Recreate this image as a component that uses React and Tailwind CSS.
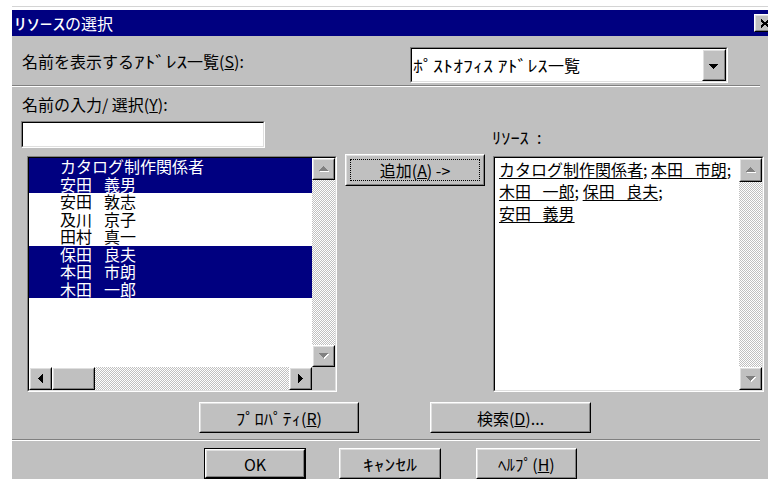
import React, { useId } from "react";

// Classic 3D bevels
function Raised({ className = "", innerClass = "", children }) {
  return (
    <div className={`border border-t-white border-l-white border-r-black border-b-black ${className}`}>
      <div className={`flex h-full w-full items-center justify-center border border-t-[#dfdfdf] border-l-[#dfdfdf] border-r-[#808080] border-b-[#808080] bg-[#c0c0c0] ${innerClass}`}>
        {children}
      </div>
    </div>
  );
}

function Sunken({ className = "", children }) {
  return (
    <div className={`border border-t-[#808080] border-l-[#808080] border-r-white border-b-white ${className}`}>
      <div className="h-full w-full border border-t-black border-l-black border-r-[#dfdfdf] border-b-[#dfdfdf]">
        {children}
      </div>
    </div>
  );
}

// 1px checker used for scrollbar tracks
function Track({ className = "" }) {
  const id = useId().replace(/:/g, "");
  return (
    <div className={`min-h-0 min-w-0 overflow-hidden ${className}`}>
      <svg className="block h-full w-full" shapeRendering="crispEdges">
        <defs>
          <pattern id={`chk${id}`} width="2" height="2" patternUnits="userSpaceOnUse">
            <rect width="2" height="2" fill="#c0c0c0" />
            <rect width="1" height="1" fill="#ffffff" />
            <rect x="1" y="1" width="1" height="1" fill="#ffffff" />
          </pattern>
        </defs>
        <rect width="100%" height="100%" fill={`url(#chk${id})`} />
      </svg>
    </div>
  );
}

function Tri({ dir, color = "#000", ghost = false }) {
  const shapes = {
    up: { w: 9, h: 5, pts: "4.5,0 9,5 0,5" },
    down: { w: 9, h: 5, pts: "0,0 9,0 4.5,5" },
    left: { w: 5, h: 9, pts: "5,0 5,9 0,4.5" },
    right: { w: 5, h: 9, pts: "0,0 5,4.5 0,9" },
  };
  const s = shapes[dir];
  return (
    <svg width={s.w + 1} height={s.h + 1} viewBox={`0 0 ${s.w + 1} ${s.h + 1}`} shapeRendering="crispEdges">
      {ghost && <polygon points={s.pts} fill="#ffffff" transform="translate(1 1)" />}
      <polygon points={s.pts} fill={color} />
    </svg>
  );
}

function Kana({ wc, sc, children }) {
  return (
    <span className={`inline-block whitespace-nowrap ${wc}`}>
      <span className={`inline-block origin-left whitespace-nowrap ${sc}`}>{children}</span>
    </span>
  );
}

function Button({ className = "", focus = false, def = false, children }) {
  const btn = (
    <Raised className={def ? "h-full w-full" : className}>
      {focus ? (
        <div className="m-[3px] flex h-[calc(100%-6px)] w-[calc(100%-6px)] items-center justify-center border border-dotted border-black">
          {children}
        </div>
      ) : (
        children
      )}
    </Raised>
  );
  if (def) return <div className={`border border-black ${className}`}>{btn}</div>;
  return btn;
}

const leftItems = [
  { text: ["カタログ制作関係者"], sel: true },
  { text: ["安田", "義男"], sel: true },
  { text: ["安田", "敦志"], sel: false },
  { text: ["及川", "京子"], sel: false },
  { text: ["田村", "真一"], sel: false },
  { text: ["保田", "良夫"], sel: true },
  { text: ["本田", "市朗"], sel: true },
  { text: ["木田", "一郎"], sel: true },
];

function Name({ parts }) {
  return (
    <>
      <span>{parts[0]}</span>
      {parts[1] && <span className="ml-[12px]">{parts[1]}</span>}
    </>
  );
}

function VScroll({ upH = "h-[22px]", downH = "h-[22px]" }) {
  return (
    <div className="flex w-[23px] shrink-0 flex-col">
      <Raised className={`${upH} w-full shrink-0`}>
        <Tri dir="up" color="#808080" ghost />
      </Raised>
      <Track className="flex-1" />
      <Raised className={`${downH} w-full shrink-0`}>
        <Tri dir="down" color="#808080" ghost />
      </Raised>
    </div>
  );
}

function U({ children }) {
  return (
    <span className="underline decoration-1 underline-offset-[2px] [word-spacing:8px]">{children}</span>
  );
}

export default function App() {
  return (
    <div className="h-[479px] w-[768px] overflow-hidden bg-white pl-[12px] pt-[6px] font-['Noto_Sans_CJK_JP',sans-serif] text-[16px] text-black">
      <div className="flex h-full flex-col border-t border-[#d4d4d4] pt-[3px]">
        {/* title bar */}
        <div className="flex h-[26px] shrink-0 items-start justify-between bg-[#000080] pl-[2px]">
          <span className="mt-[3px] leading-[20px] text-white">
            <Kana wc="w-[51px]" sc="scale-x-[1.6]">ﾘｿｰｽ</Kana>の選択
          </span>
          <Raised className="-mr-[7px] mt-[4px] h-[18px] w-[21px]">
            <svg width="10" height="9" viewBox="0 0 10 9" shapeRendering="crispEdges">
              <path d="M1 1 L9 8 M9 1 L1 8" stroke="#000" strokeWidth="2" />
            </svg>
          </Raised>
        </div>

        {/* dialog body */}
        <div className="flex flex-1 flex-col bg-[#c0c0c0]">
          <div className="flex h-[49px] shrink-0">
            <div className="w-[398px] whitespace-nowrap pl-[10px] pt-[15px] leading-[20px]">
              名前を表示する<Kana wc="w-[53px]" sc="scale-x-[1.33]">ｱﾄﾞﾚｽ</Kana>一覧(<span className="underline">S</span>):
            </div>
            <Sunken className="mt-[11px] h-[36px] w-[318px]">
              <div className="flex h-full bg-white">
                <div className="flex flex-1 items-center whitespace-nowrap pl-[1px] leading-[20px]">
                  <Kana wc="w-[135px]" sc="scale-x-[1.25]">ﾎﾟｽﾄｵﾌｨｽ ｱﾄﾞﾚｽ</Kana>一覧
                </div>
                <Raised className="h-full w-[24px]" innerClass="pt-[3px]">
                  <Tri dir="down" />
                </Raised>
              </div>
            </Sunken>
          </div>

          <div className="mr-[8px] h-[2px] shrink-0 border-t border-b border-t-[#808080] border-b-white" />

          <div className="mt-[7px] pl-[10px] leading-[20px]">
            名前の入力/ 選択(<span className="underline">Y</span>):
          </div>

          <div className="mt-[7px] flex items-end">
            <Sunken className="ml-[9px] h-[27px] w-[244px]">
              <div className="h-full bg-white" />
            </Sunken>
            <div className="mb-[1px] ml-[227px] whitespace-nowrap leading-[20px]">
              <Kana wc="w-[37px]" sc="scale-x-[1.15]">ﾘｿｰｽ</Kana>
              <span className="ml-[8px]">:</span>
            </div>
          </div>

          {/* lists */}
          <div className="mt-[6px] flex items-start">
            <Sunken className="ml-[15px] mt-[2px] h-[236px] w-[310px]">
              <div className="flex h-full flex-col bg-white">
                <div className="flex min-h-0 flex-1">
                  <div className="flex-1">
                    {leftItems.map((it, i) => (
                      <div
                        key={i}
                        className={`h-[17.5px] whitespace-nowrap pl-[31px] leading-[17.5px] ${
                          it.sel ? "bg-[#000080] text-white" : "bg-white text-black"
                        }`}
                      >
                        <Name parts={it.text} />
                      </div>
                    ))}
                  </div>
                  <VScroll />
                </div>
                <div className="flex h-[23px] shrink-0">
                  <Raised className="h-full w-[23px] shrink-0">
                    <Tri dir="left" />
                  </Raised>
                  <Raised className="h-full w-[43px] shrink-0" />
                  <Track className="flex-1" />
                  <Raised className="h-full w-[23px] shrink-0">
                    <Tri dir="right" />
                  </Raised>
                  <div className="w-[23px] shrink-0 bg-[#c0c0c0]" />
                </div>
              </div>
            </Sunken>

            <Button className="ml-[8px] h-[32px] w-[140px]" focus>
              <span className="whitespace-nowrap leading-[20px]">
                追加(<span className="underline">A</span>) -&gt;
              </span>
            </Button>

            <Sunken className="ml-[8px] mt-[2px] h-[236px] w-[271px]">
              <div className="flex h-full bg-white">
                <div className="flex-1 pl-[4px] leading-[22px]">
                  <div className="whitespace-nowrap">
                    <U>カタログ制作関係者</U>; <U>本田 市朗</U>;
                  </div>
                  <div className="whitespace-nowrap">
                    <U>木田 一郎</U>; <U>保田 良夫</U>;
                  </div>
                  <div className="whitespace-nowrap">
                    <U>安田 義男</U>
                  </div>
                </div>
                <VScroll upH="h-[24px]" downH="h-[23px]" />
              </div>
            </Sunken>
          </div>

          {/* property / search */}
          <div className="mt-[10px] flex">
            <Button className="ml-[187px] h-[31px] w-[160px]">
              <span className="whitespace-nowrap leading-[20px]">
                <Kana wc="w-[65px]" sc="scale-x-[1.16]">ﾌﾟﾛﾊﾟﾃｨ</Kana>(<span className="underline">R</span>)
              </span>
            </Button>
            <Button className="ml-[71px] h-[31px] w-[161px]">
              <span className="whitespace-nowrap leading-[20px]">
                検索(<span className="underline">D</span>)...
              </span>
            </Button>
          </div>

          <div className="mr-[8px] mt-[6px] h-[2px] shrink-0 border-t border-b border-t-[#808080] border-b-white" />

          {/* OK / cancel / help */}
          <div className="mt-[7px] flex">
            <Button def className="ml-[192px] h-[31px] w-[102px] shrink-0">
              <span className="leading-[20px]">OK</span>
            </Button>
            <Button className="ml-[33px] h-[31px] w-[102px] shrink-0">
              <span className="whitespace-nowrap leading-[20px]">
                <Kana wc="w-[54px]" sc="scale-x-[1.35]">ｷｬﾝｾﾙ</Kana>
              </span>
            </Button>
            <Button className="ml-[35px] h-[31px] w-[101px] shrink-0">
              <span className="whitespace-nowrap leading-[20px]">
                <Kana wc="w-[34px]" sc="scale-x-[1.06]">ﾍﾙﾌﾟ</Kana>(<span className="underline">H</span>)
              </span>
            </Button>
          </div>
        </div>
      </div>
    </div>
  );
}
